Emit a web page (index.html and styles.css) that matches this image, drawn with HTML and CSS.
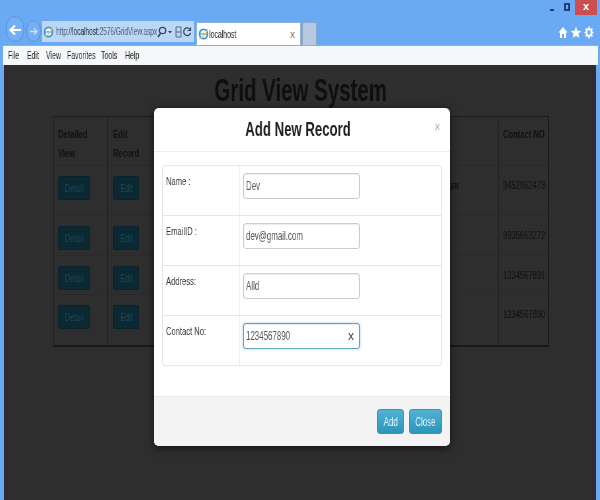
FILE: index.html
```html
<!DOCTYPE html>
<html lang="en">
<head>
<meta charset="utf-8">
<title>localhost</title>
<link rel="stylesheet" href="styles.css">
</head>
<body>
<div class="window">
  <div class="titlebar">
    <span class="win-min"></span>
    <span class="win-max"></span>
    <span class="win-close">x</span>
  </div>
  <div class="navbar">
    <svg class="nav-back" width="22" height="30" viewBox="0 0 22 30"><ellipse cx="12" cy="15" rx="9" ry="12.500" fill="#74aff3" stroke="#5a97e0"/><path d="M18 16H8M12 11.500L7.500 16l4.500 4.500" fill="none" stroke="#fff" stroke-width="2.200"/></svg>
    <svg class="nav-fwd" width="17" height="30" viewBox="0 0 17 30"><ellipse cx="8.500" cy="15" rx="7" ry="10.500" fill="#74aff3" stroke="#5a97e0"/><path d="M5 15.500h7M9 12.500l3 3-3 3" fill="none" stroke="#cfe2fa" stroke-width="1.300"/></svg>
    <div class="address">
      <svg class="ie" width="11" height="16" viewBox="0 0 14 16"><ellipse cx="7" cy="8" rx="5" ry="6" fill="#fff" stroke="#3d94d8" stroke-width="2.200"/><path d="M3 8h8" stroke="#3d94d8" stroke-width="1.500"/><path d="M1.500 13.500C5 14 11 7 12.500 1.500" fill="none" stroke="#e8c840" stroke-width="1.400"/></svg>
      <span class="url sq">http://<b>localhost</b><i>:2576/GridView.aspx</i></span>
      <svg class="addr-tools" width="36" height="14" viewBox="0 0 36 14"><circle cx="5.500" cy="5.500" r="3.200" fill="none" stroke="#33475c" stroke-width="1.300"/><path d="M3.500 8.500L1 12" stroke="#33475c" stroke-width="1.500"/><path d="M11 6h4l-2 2.500z" fill="#33475c"/><path d="M19 2h5v10h-5zM19 7h5" fill="none" stroke="#5a6c80"/><path d="M33 4.500A3.500 3.800 0 1 0 33.500 8M33.500 2.500v3h-3" fill="none" stroke="#33475c" stroke-width="1.200"/></svg>
    </div>
    <div class="tab">
      <svg class="ie" width="11" height="16" viewBox="0 0 14 16"><ellipse cx="7" cy="8" rx="5" ry="6" fill="#fff" stroke="#3d94d8" stroke-width="2.200"/><path d="M3 8h8" stroke="#3d94d8" stroke-width="1.500"/><path d="M1.500 13.500C5 14 11 7 12.500 1.500" fill="none" stroke="#e8c840" stroke-width="1.400"/></svg>
      <span class="tab-title"><span class="sq">localhost</span></span>
      <span class="tab-x">x</span>
    </div>
    <div class="tab-new"></div>
    <div class="tools">
      <svg width="12" height="13" viewBox="0 0 12 13"><path d="M6 1L1.500 6.500h1.500V12h2V8h2v4h2V6.500h1.500z" fill="#fff"/></svg>
      <svg width="12" height="13" viewBox="0 0 12 13"><path d="M6 .800l1.500 3.900 3.700.300-2.800 2.700.9 4.100L6 9.800l-3.300 2 .9-4.100L.800 5l3.700-.300z" fill="#fff"/></svg>
      <svg width="12" height="13" viewBox="0 0 12 13"><ellipse cx="6" cy="6.500" rx="2.600" ry="3.300" fill="none" stroke="#fff" stroke-width="1.800"/><path d="M6 .500v2.400M6 10.100v2.400M1.500 6.500h2M8.500 6.500h2M2.600 2.600l1.500 1.700M8 8.700l1.500 1.700M9.400 2.600L8 4.300M4.100 8.700l-1.500 1.700" stroke="#fff" stroke-width="1.500"/></svg>
    </div>
  </div>
  <nav class="menubar">
    <span class="menu-item"><span class="sq">File</span></span>
    <span class="menu-item"><span class="sq">Edit</span></span>
    <span class="menu-item vw"><span class="sq">View</span></span>
    <span class="menu-item fav"><span class="sq">Favorites</span></span>
    <span class="menu-item tl"><span class="sq">Tools</span></span>
    <span class="menu-item"><span class="sq">Help</span></span>
  </nav>
  <main class="page">
    <h1 class="page-title"><span class="sqc">Grid View System</span></h1>
    <table class="grid">
      <thead>
        <tr class="row-head"><th class="c1"><span class="sq">Detailed<br>View</span></th><th class="c2"><span class="sq">Edit<br>Record</span></th><th class="c3"></th><th class="c4"></th><th class="c5"></th><th class="c6"><span class="sq">Contact NO</span></th></tr>
      </thead>
      <tbody>
        <tr class="row-a"><td><span class="btn-dim detail"><span class="sqc">Detail</span></span></td><td><span class="btn-dim"><span class="sqc">Edit</span></span></td><td></td><td></td><td class="addr"><span class="sqr">Nagar</span></td><td><span class="sq">9452962473</span></td></tr>
        <tr class="row-b"><td><span class="btn-dim detail"><span class="sqc">Detail</span></span></td><td><span class="btn-dim"><span class="sqc">Edit</span></span></td><td></td><td></td><td></td><td><span class="sq">9935663272</span></td></tr>
        <tr class="row-c"><td><span class="btn-dim detail"><span class="sqc">Detail</span></span></td><td><span class="btn-dim"><span class="sqc">Edit</span></span></td><td></td><td></td><td></td><td><span class="sq">1234567891</span></td></tr>
        <tr class="row-d"><td><span class="btn-dim detail"><span class="sqc">Detail</span></span></td><td><span class="btn-dim"><span class="sqc">Edit</span></span></td><td></td><td></td><td></td><td><span class="sq">1234567890</span></td></tr>
      </tbody>
    </table>
    <div class="modal">
      <div class="modal-head">
        <h2 class="modal-title"><span class="sqc">Add New Record</span></h2>
        <span class="modal-x"><span class="sqc">×</span></span>
      </div>
      <div class="modal-body">
        <div class="form">
          <div class="form-row"><div class="form-label"><span class="sq">Name :</span></div><div class="form-field"><div class="input"><span class="sq">Dev</span></div></div></div>
          <div class="form-row"><div class="form-label"><span class="sq">EmailID :</span></div><div class="form-field"><div class="input"><span class="sq">dev@gmail.com</span></div></div></div>
          <div class="form-row"><div class="form-label"><span class="sq">Address:</span></div><div class="form-field"><div class="input"><span class="sq">Alld</span></div></div></div>
          <div class="form-row"><div class="form-label"><span class="sq">Contact No:</span></div><div class="form-field"><div class="input focus"><span class="sq grow">1234567890</span><span class="clear">x</span></div></div></div>
        </div>
      </div>
      <div class="modal-foot">
        <span class="btn btn-add"><span class="sqc">Add</span></span>
        <span class="btn btn-close"><span class="sqc">Close</span></span>
      </div>
    </div>
  </main>
</div>
</body>
</html>
```
FILE: styles.css
```css
* { box-sizing: border-box; }
html, body { margin: 0; height: 100%; }
body {
  background: #6aa9f4;
  font-family: "Liberation Sans", Arial, sans-serif;
  font-size: 11px;
  color: #333;
  overflow: hidden;
}
.window { width: 600px; height: 500px; display: flex; flex-direction: column; overflow: hidden; }

/* The reference is squeezed horizontally: text keeps its height but is about 2/3 as wide */
.sq, .sqc, .sqr { display: inline-block; white-space: nowrap; transform: scaleX(.66); will-change: transform; }
.sq { transform-origin: 0 50%; }
.sqc { transform-origin: 50% 50%; }
.sqr { transform-origin: 100% 50%; }

.titlebar { height: 16px; display: flex; justify-content: flex-end; align-items: flex-start; padding-right: 3px; flex: none; }
.win-min { width: 4px; height: 2px; background: #1f3f78; margin: 9px 10px 0 0; }
.win-max { width: 6px; height: 8px; border: 2px solid #1f3f78; margin: 3px 5px 0 0; }
.win-close { width: 22px; height: 15px; background: #cb4f4f; color: #fff; font-weight: bold; font-size: 11px; line-height: 13px; text-align: center; }

.navbar { height: 29px; display: flex; align-items: flex-end; padding-left: 3px; flex: none; }
.nav-back { margin-bottom: 1px; }
.nav-fwd { margin: 0 0 -1px 0; }
.address {
  width: 152px; height: 21px; margin: 0 2px 3px 0;
  background: #bcd7f5;
  display: flex; align-items: center; padding: 0 1px;
  font-size: 10px; color: #49617c;
}
.address .ie { flex: none; margin-right: 2px; }
.url { flex: 1; min-width: 0; letter-spacing: -.08px; }
.url b { color: #16222e; font-weight: normal; }
.url i { font-style: normal; }
.addr-tools { flex: none; }
.tab {
  width: 105px; height: 23px;
  background: #fff;
  border: 1px solid #8fb2da; border-bottom: 0;
  display: flex; align-items: center; padding: 0 4px 0 1px;
  font-size: 10.500px; color: #222;
}
.tab .ie { flex: none; }
.tab-title { flex: 1; }
.tab-x { color: #777; font-size: 10px; padding-right: 1px; }
.tab-new { width: 15px; height: 23px; margin-left: 1px; background: #b6c9e0; border: 1px solid #8ba6c6; border-bottom: 0; border-radius: 2px 2px 0 0; }
.tools { margin-left: auto; display: flex; gap: 1px; padding: 0 5px 6px 0; }

.menubar {
  height: 20px; flex: none; margin: 0 2px 0 3px;
  background: #f6f7f9;
  border-top: 1px solid #8fb0d8;
  display: flex; align-items: center; padding: 0 0 2px 5px;
  font-size: 10.500px; color: #222;
}
.menu-item { width: 19px; }
.menu-item.vw { width: 21px; }
.menu-item.fav { width: 34px; }
.menu-item.tl { width: 24px; }
.page {
  position: relative;
  flex: 1;
  margin: 0 4px;
  background: #2e2e2e;
  color: #111;
  display: flex; flex-direction: column; align-items: center;
}
.page-title { margin: 10px 0 0; padding-left: 1px; font-size: 31px; line-height: 32px; font-weight: bold; color: #0f0f0f; height: 41px; }

.grid { width: 496px; margin: 0 0 0 2px; border-collapse: collapse; table-layout: fixed; border: 1px solid #1a1a1a; border-bottom-width: 2px; }
.grid th, .grid td { border-left: 1px solid #222; text-align: left; vertical-align: top; padding: 0 4px; font-size: 11.500px; line-height: 19px; color: #111; }
.grid th:nth-child(2), .grid td:nth-child(2) { padding-left: 5px; }
.grid th { font-weight: bold; padding-top: 8px; border-bottom: 1px solid #2a2a2a; }
.c1 { width: 54px; } .c2 { width: 56px; } .c3 { width: 90px; } .c4 { width: 110px; } .c5 { width: 135px; }
.row-head { height: 49px; }
.row-a { height: 50px; } .row-b { height: 40px; } .row-c { height: 39px; } .row-d { height: 51px; }
.grid td { padding-top: 10px; border-bottom: 1px solid #2a2a2a; }
.row-d td { border-bottom: 0; }
.btn-dim { display: block; width: 26px; height: 24px; background: #0b2833; border: 1px solid #0a222c; border-radius: 2px; color: #1c4c5d; text-align: center; line-height: 22px; font-size: 11px; }
.btn-dim.detail { width: 32px; }
.grid .addr { text-align: right; color: #0c0c0c; padding-right: 39px; }

.modal {
  position: absolute; left: 150px; top: 43px;
  width: 296px; height: 338px;
  background: #fff; border-radius: 5px;
  box-shadow: 0 2px 8px rgba(0,0,0,.6);
  display: flex; flex-direction: column;
}
.modal-head { height: 44px; flex: none; border-bottom: 1px solid #eee; position: relative; display: flex; justify-content: center; align-items: center; padding-right: 8px; }
.modal-title { margin: 0; font-size: 20px; font-weight: bold; color: #222; }
.modal-x { position: absolute; right: 8px; top: 10px; font-size: 15px; color: #aaa; }
.modal-body { flex: 1; padding: 13px 8px 0; }
.form { border: 1px solid #e6e6e6; border-radius: 3px; }
.form-row { display: flex; height: 50px; border-top: 1px solid #e6e6e6; }
.form-row:first-child { border-top: 0; height: 49px; }
.form-label { width: 77px; flex: none; border-right: 1px solid #efefef; padding: 9px 3px; font-size: 11.500px; color: #333; }
.form-field { padding: 7px 3px; flex: 1; }
.input {
  width: 117px; height: 26px; display: flex; align-items: center;
  border: 1px solid #ccc; border-radius: 3px; padding: 0 2px;
  box-shadow: inset 0 1px 1px rgba(0,0,0,.08);
  font-size: 12px; color: #555; background: #fff;
}
.input.focus { border-color: #66a0c0; box-shadow: inset 0 1px 1px rgba(0,0,0,.08), 0 0 3px rgba(102,175,233,.6); }
.grow { flex: 1; width: 0; }
.clear { font-size: 12px; color: #444; padding-right: 3px; }
.modal-foot {
  height: 50px; flex: none;
  background: #f3f3f3; border-top: 1px solid #e8e8e8;
  border-radius: 0 0 5px 5px;
  display: flex; justify-content: flex-end; align-items: center; gap: 5px; padding: 0 8px 0 0;
}
.btn {
  height: 25px; display: flex; align-items: center; justify-content: center;
  background: linear-gradient(#4fb2d2, #2d94bb);
  border: 1px solid #2f98bd; border-radius: 3px;
  color: #e8f6fb; font-size: 12px;
}
.btn-add { width: 27px; }
.btn-close { width: 33px; }
```
